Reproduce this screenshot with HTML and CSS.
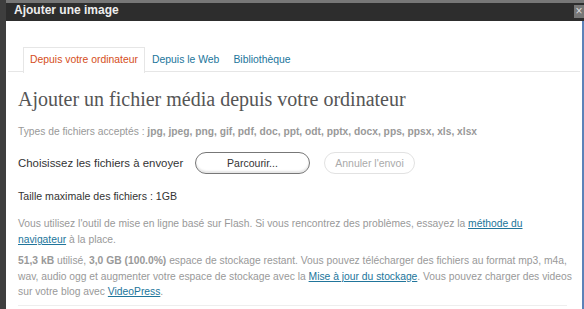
FILE: index.html
```html
<!DOCTYPE html>
<html lang="fr">
<head>
    <meta charset="UTF-8">
    <title>Ajouter une image</title>
    <link rel="stylesheet" href="styles.css">
</head>
<body>
    <div class="backdrop"></div>
    <div class="dialog">
        <div class="titlebar">
            <span class="title">Ajouter une image</span>
            <span class="close">&times;</span>
        </div>

        <div class="frame">
            <ul class="tabs">
                <li class="tab current">Depuis votre ordinateur</li>
                <li class="tab">Depuis le Web</li>
                <li class="tab">Bibliothèque</li>
            </ul>

            <div class="panel">
                <h3 class="heading">Ajouter un fichier média depuis votre ordinateur</h3>

                <p class="types">Types de fichiers acceptés : <b>jpg, jpeg, png, gif, pdf, doc, ppt, odt, pptx, docx, pps, ppsx, xls, xlsx</b></p>

                <div class="upload-row">
                    <span class="label">Choisissez les fichiers à envoyer</span>
                    <button class="pill browse">Parcourir...</button>
                    <button class="pill cancel">Annuler l'envoi</button>
                </div>

                <p class="max-size">Taille maximale des fichiers : 1GB</p>

                <p class="note">Vous utilisez l'outil de mise en ligne basé sur Flash. Si vous rencontrez des problèmes, essayez la <a href="#">méthode du navigateur</a> à la place.</p>

                <p class="note storage"><b>51,3 kB</b> utilisé, <b>3,0 GB</b> <b>(100.0%)</b> espace de stockage restant. Vous pouvez télécharger des fichiers au format mp3, m4a, wav, audio ogg et augmenter votre espace de stockage avec la <a href="#">Mise à jour du stockage</a>. Vous pouvez charger des videos sur votre blog avec <a href="#">VideoPress</a>.</p>

                <div class="rule"></div>
            </div>
        </div>
    </div>
</body>
</html>
```

FILE: styles.css
```css
body {
    margin: 0;
    width: 584px;
    height: 309px;
    overflow: hidden;
    background-color: #3b3b3b;
    font-family: 'Liberation Sans', Arial, sans-serif;
    display: flex;
}

.backdrop {
    width: 6px;
    flex-shrink: 0;
    background-color: #3e3e3e;
}

.dialog {
    flex: 1;
    display: flex;
    flex-direction: column;
}

.titlebar {
    height: 18px;
    border-top: 3px solid #777;
    background-color: #2d2d2d;
    display: flex;
    align-items: center;
    justify-content: space-between;
    padding-left: 8px;
}

.title {
    color: #eee;
    font-size: 12px;
    font-weight: bold;
    margin-top: -4px;
}

.close {
    width: 10px;
    height: 13px;
    background-color: #777;
    color: #ddd;
    font-size: 12px;
    line-height: 13px;
    text-align: center;
    align-self: flex-start;
    margin-top: 2px;
}

.frame {
    flex: 1;
    background-color: #fff;
    border-right: 2px solid #5d82b8;
    padding-top: 25px;
}

.tabs {
    list-style: none;
    margin: 0 2px 0 2px;
    padding: 0 0 0 15px;
    display: flex;
    border-bottom: 1px solid #e6e6e6;
    height: 25px;
}

.tab {
    font-size: 10.4px;
    color: #21759b;
    padding: 0 6px;
    line-height: 24px;
    margin-top: 1px;
    border: 1px solid transparent;
    border-bottom: none;
}

.tab.current {
    color: #d54e21;
    border-color: #e6e6e6;
    background-color: #fff;
    height: 25px;
}

.panel {
    padding: 0 10px 0 12px;
}

.heading {
    font-family: 'Liberation Serif', Georgia, serif;
    font-weight: normal;
    font-size: 20px;
    color: #555;
    margin: 15px 0 0;
    line-height: 24px;
}

.types {
    font-size: 10.25px;
    color: #999;
    margin: 15px 0 0;
}

.upload-row {
    display: flex;
    align-items: center;
    margin-top: 15px;
}

.label {
    font-size: 11.4px;
    color: #333;
    width: 177px;
}

.pill {
    font-family: inherit;
    border-radius: 11px;
    background-color: #fff;
    height: 22px;
    padding: 0;
}

.browse {
    width: 115px;
    border: 1px solid #777;
    font-size: 10.5px;
    color: #333;
    box-shadow: inset 0 -2px 2px #e6e6e6;
}

.cancel {
    width: 91px;
    margin-left: 14px;
    border: 1px solid #e2e2e2;
    font-size: 10.5px;
    color: #aaa;
}

.max-size {
    font-size: 10.6px;
    color: #333;
    margin: 16px 0 0;
}

.note {
    font-size: 10.3px;
    color: #999;
    line-height: 16px;
    margin: 14px 0 0;
}

.storage {
    line-height: 15.5px;
    margin-top: 5px;
}

.note a {
    color: #21759b;
}

.rule {
    margin-top: 5px;
    border-top: 1px solid #eee;
    margin-right: 5px;
}
```
